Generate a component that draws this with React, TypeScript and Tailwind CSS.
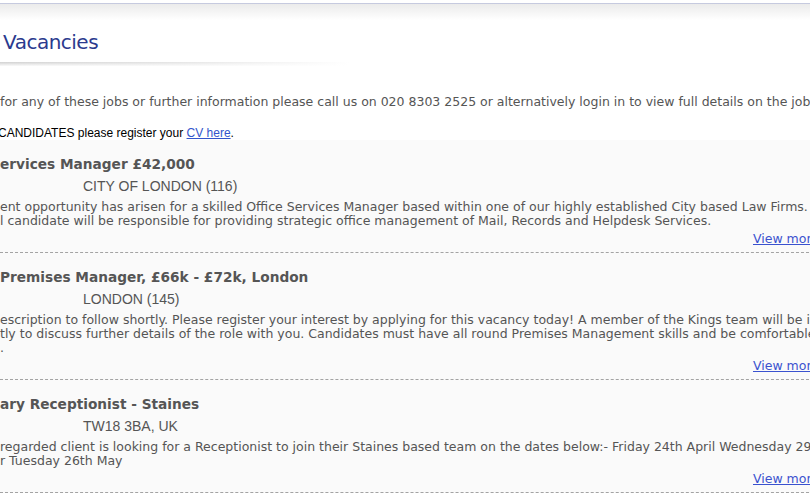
import React from "react";

interface Vacancy {
  title: string;
  location: string;
  lines: string[];
}

const vacancies: Vacancy[] = [
  {
    title: "ervices Manager £42,000",
    location: "CITY OF LONDON (116)",
    lines: [
      "ent opportunity has arisen for a skilled Office Services Manager based within one of our highly established City based Law Firms. The",
      "l candidate will be responsible for providing strategic office management of Mail, Records and Helpdesk Services.",
    ],
  },
  {
    title: "Premises Manager, £66k - £72k, London",
    location: "LONDON (145)",
    lines: [
      "escription to follow shortly. Please register your interest by applying for this vacancy today! A member of the Kings team will be in touch",
      "tly to discuss further details of the role with you. Candidates must have all round Premises Management skills and be comfortable with",
      ".",
    ],
  },
  {
    title: "ary Receptionist - Staines",
    location: "TW18 3BA, UK",
    lines: [
      "regarded client is looking for a Receptionist to join their Staines based team on the dates below:- Friday 24th April Wednesday 29th April",
      "r Tuesday 26th May",
    ],
  },
];

// One listing row: title, location, description lines, then the "View more" link
function VacancyItem({ vacancy }: { vacancy: Vacancy }) {
  return (
    <div className="border-b border-dashed border-[#a3a3a3] pt-[15px] pb-[6px]">
      <div className="h-[18px] whitespace-nowrap text-[13.7px] leading-[18px] font-bold text-[#555] font-['DejaVu_Sans',sans-serif]">
        {vacancy.title}
      </div>
      <div className="h-[26px] pl-[83px] whitespace-nowrap text-[14px] leading-[26px] text-[#555] font-['Liberation_Sans',Arial,sans-serif]">
        {vacancy.location}
      </div>
      <div className="mt-[1px] text-[12.5px] leading-[14px] text-[#555] font-['DejaVu_Sans',sans-serif]">
        {vacancy.lines.map((line, i) => (
          <div key={i} className="h-[14px] whitespace-nowrap">
            {line}
          </div>
        ))}
      </div>
      <div className="mt-[4px] flex h-[14px] justify-end text-[12.5px] leading-[14px] font-['DejaVu_Sans',sans-serif]">
        <a href="#" className="whitespace-nowrap text-[#3a52cf] underline">
          View more
        </a>
      </div>
    </div>
  );
}

export default function App() {
  return (
    <div className="h-[497px] w-[810px] overflow-hidden bg-white">
      <div className="w-[819px]">
        {/* Top rule with soft fade */}
        <div className="h-[3px] bg-white" />
        <div className="h-px bg-[#c6cadf]" />
        <div className="h-[16px] bg-gradient-to-b from-[#ebebeb] to-white" />

        {/* Page heading */}
        <div className="pt-[10px] pl-[3px]">
          <h1 className="h-[24px] text-[20px] leading-[24px] tracking-[-0.5px] text-[#2b3a8e] font-['DejaVu_Sans',sans-serif]">
            Vacancies
          </h1>
        </div>
        <div className="mt-[8px] w-[350px]">
          <div className="h-px bg-gradient-to-r from-[#d6d6d6] via-[#e6e6e6] to-white" />
          <div className="h-px bg-gradient-to-r from-[#e0e0e0] via-[#ececec] to-white" />
          <div className="h-px bg-gradient-to-r from-[#ebebeb] via-[#f2f2f2] to-white" />
          <div className="h-px bg-gradient-to-r from-[#f5f5f5] via-[#f8f8f8] to-white" />
        </div>

        {/* Intro text */}
        <p className="mt-[29px] h-[14px] whitespace-nowrap text-[12.5px] leading-[14px] text-[#555] font-['DejaVu_Sans',sans-serif]">
          for any of these jobs or further information please call us on 020 8303 2525 or alternatively login in to view full details on the jobs
        </p>
        <p className="mt-[17px] ml-[-2px] h-[14px] whitespace-nowrap text-[12px] leading-[14px] text-black font-['Liberation_Sans',Arial,sans-serif]">
          CANDIDATES please register your{" "}
          <a href="#" className="text-[#3355cc] underline">
            CV here
          </a>
          .
        </p>

        {/* Listings */}
        <div className="bg-[#fafafa]">
          {vacancies.map((v, i) => (
            <VacancyItem key={i} vacancy={v} />
          ))}
        </div>
      </div>
    </div>
  );
}
